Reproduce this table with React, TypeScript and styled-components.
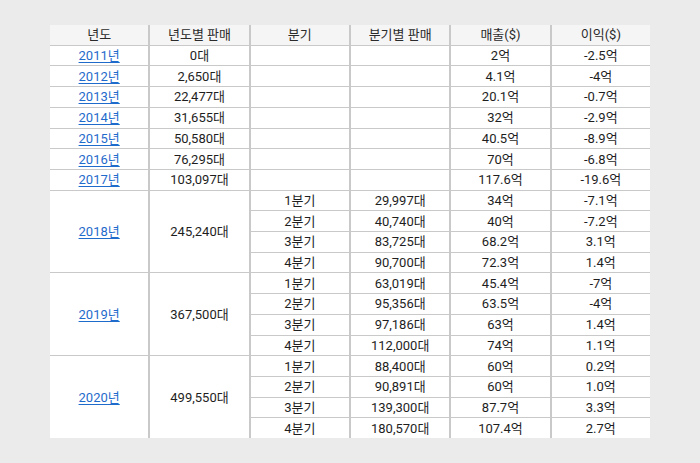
import React from "react";
import styled, { createGlobalStyle } from "styled-components";

const Global = createGlobalStyle`
  html, body { margin: 0; padding: 0; background: #ebebeb; }
  body { font-family: Roboto, "Noto Sans CJK KR", sans-serif; }
`;

const Page = styled.div`
  width: 700px;
  height: 463px;
  padding: 25px 50px 0 50px;
  box-sizing: border-box;
  background: #ebebeb;
`;

const Grid = styled.div`
  display: grid;
  grid-template-columns: repeat(6, 1fr);
  grid-template-rows: repeat(20, 1fr);
  column-gap: 2px;
  row-gap: 1px;
  width: 600px;
  height: 413px;
  background: #c9c9c9;
`;

const Cell = styled.div<{ $head?: boolean; $span?: number }>`
  display: flex;
  align-items: center;
  justify-content: center;
  background: ${(p) => (p.$head ? "#f5f5f5" : "#ffffff")};
  color: ${(p) => (p.$head ? "#2b2b2b" : "#1e1e1e")};
  font-size: 13px;
  line-height: 1;
  white-space: nowrap;
  ${(p) => (p.$span ? `grid-row: span ${p.$span};` : "")}
`;

const YearLink = styled.a`
  color: #1f6bcc;
  text-decoration: underline;
  text-underline-offset: 2px;
  cursor: pointer;
`;

const headers = ["년도", "년도별 판매", "분기", "분기별 판매", "매출($)", "이익($)"];

const simple: [string, string, string, string][] = [
  ["2011년", "0대", "2억", "-2.5억"],
  ["2012년", "2,650대", "4.1억", "-4억"],
  ["2013년", "22,477대", "20.1억", "-0.7억"],
  ["2014년", "31,655대", "32억", "-2.9억"],
  ["2015년", "50,580대", "40.5억", "-8.9억"],
  ["2016년", "76,295대", "70억", "-6.8억"],
  ["2017년", "103,097대", "117.6억", "-19.6억"],
];

type Group = {
  year: string;
  total: string;
  quarters: [string, string, string, string][];
};

const groups: Group[] = [
  {
    year: "2018년",
    total: "245,240대",
    quarters: [
      ["1분기", "29,997대", "34억", "-7.1억"],
      ["2분기", "40,740대", "40억", "-7.2억"],
      ["3분기", "83,725대", "68.2억", "3.1억"],
      ["4분기", "90,700대", "72.3억", "1.4억"],
    ],
  },
  {
    year: "2019년",
    total: "367,500대",
    quarters: [
      ["1분기", "63,019대", "45.4억", "-7억"],
      ["2분기", "95,356대", "63.5억", "-4억"],
      ["3분기", "97,186대", "63억", "1.4억"],
      ["4분기", "112,000대", "74억", "1.1억"],
    ],
  },
  {
    year: "2020년",
    total: "499,550대",
    quarters: [
      ["1분기", "88,400대", "60억", "0.2억"],
      ["2분기", "90,891대", "60억", "1.0억"],
      ["3분기", "139,300대", "87.7억", "3.3억"],
      ["4분기", "180,570대", "107.4억", "2.7억"],
    ],
  },
];

export default function App() {
  return (
    <>
      <Global />
      <Page>
        <Grid>
          {headers.map((h) => (
            <Cell key={h} $head>
              {h}
            </Cell>
          ))}
          {simple.map(([y, s, r, p]) => (
            <React.Fragment key={y}>
              <Cell>
                <YearLink>{y}</YearLink>
              </Cell>
              <Cell>{s}</Cell>
              <Cell />
              <Cell />
              <Cell>{r}</Cell>
              <Cell>{p}</Cell>
            </React.Fragment>
          ))}
          {groups.map((g) =>
            g.quarters.map(([q, s, r, p], i) => (
              <React.Fragment key={g.year + q}>
                {i === 0 && (
                  <>
                    <Cell $span={4}>
                      <YearLink>{g.year}</YearLink>
                    </Cell>
                    <Cell $span={4}>{g.total}</Cell>
                  </>
                )}
                <Cell>{q}</Cell>
                <Cell>{s}</Cell>
                <Cell>{r}</Cell>
                <Cell>{p}</Cell>
              </React.Fragment>
            ))
          )}
        </Grid>
      </Page>
    </>
  );
}
